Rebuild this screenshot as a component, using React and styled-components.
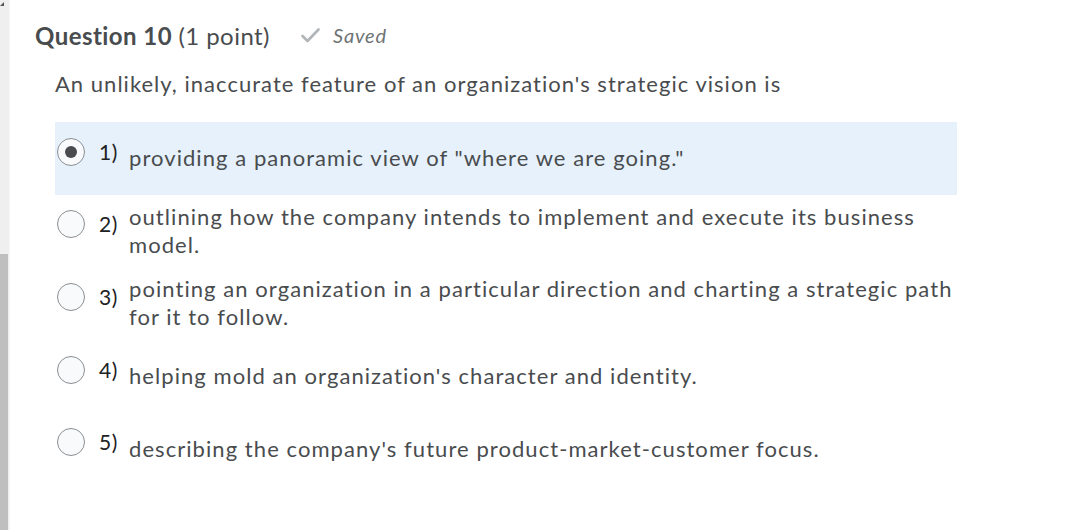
import React from "react";
import styled, { createGlobalStyle } from "styled-components";

const Global = createGlobalStyle`
  html, body { margin: 0; padding: 0; background: #ffffff; }
  body { font-family: Lato, "Open Sans", "Liberation Sans", sans-serif; color: #494c4e; }
`;

const Page = styled.div`
  display: flex;
  width: 1077px;
  height: 530px;
  overflow: hidden;
`;

const Scrollbar = styled.div`
  position: relative;
  width: 9px;
  flex: none;
  display: flex;
  flex-direction: column;
  background: #efefef;
  border-right: 1px solid #f6f6f6;
`;

const ScrollArrow = styled.div`
  position: absolute;
  left: 0;
  top: 2px;
  width: 0;
  height: 0;
  border-left: 4px solid transparent;
  border-bottom: 4px solid #555;
`;

const ScrollTrack = styled.div`
  height: 254px;
  flex: none;
`;

const ScrollThumb = styled.div`
  flex: 1;
  width: 8px;
  background: #bfbfbf;
`;

const Content = styled.div`
  flex: 1;
  padding: 20px 0 0 25px;
`;

const Header = styled.div`
  display: flex;
  align-items: center;
  height: 30px;
`;

const Title = styled.h2`
  margin: 0;
  font-size: 24px;
  letter-spacing: 0.45px;
  font-weight: 700;
  color: #494c4e;
`;

const Points = styled.span`
  font-weight: 400;
`;

const Saved = styled.span`
  display: flex;
  align-items: center;
  margin-left: 31px;
  font-size: 20px;
  letter-spacing: 0.8px;
  font-style: italic;
  color: #6e7376;
  gap: 13px;
`;

const Prompt = styled.p`
  margin: 20px 0 0 20px;
  font-size: 22px;
  letter-spacing: 1.02px;
  line-height: 28px;
  color: #494c4e;
`;

const Options = styled.div`
  margin: 24px 0 0 20px;
  width: 902px;
  display: flex;
  flex-direction: column;
`;

const Row = styled.label`
  display: flex;
  align-items: center;
  min-height: 72.6px;
  padding-left: 2px;
  background: ${(p) => (p.$selected ? "#e6f1fb" : "transparent")};
`;

const Lead = styled.div`
  display: flex;
  align-items: center;
  padding-bottom: 13px;
  flex: none;
`;

const Radio = styled.span`
  width: 28px;
  height: 28px;
  box-sizing: border-box;
  border-radius: 50%;
  border: 1px solid #8a8f93;
  background: #f9fafb;
  display: flex;
  align-items: center;
  justify-content: center;
  &::after {
    content: "";
    display: ${(p) => (p.$checked ? "block" : "none")};
    width: 12px;
    height: 12px;
    border-radius: 50%;
    background: #494c4e;
  }
`;

const Num = styled.span`
  width: 30px;
  margin-left: 14px;
  font-size: 21px;
  letter-spacing: 0.6px;
  line-height: 24px;
  color: #202122;
`;

const Text = styled.span`
  flex: 1;
  font-size: 22px;
  letter-spacing: 1.06px;
  line-height: 28px;
  color: #494c4e;
`;

const options = [
  'providing a panoramic view of "where we are going."',
  "outlining how the company intends to implement and execute its business model.",
  "pointing an organization in a particular direction and charting a strategic path for it to follow.",
  "helping mold an organization's character and identity.",
  "describing the company's future product-market-customer focus.",
];

const Check = () => (
  <svg width="19" height="15" viewBox="0 0 19 15" fill="none">
    <path d="M1.5 8 L6.5 13 L17.5 1.5" stroke="#b1b5b8" strokeWidth="2.6" strokeLinecap="round" strokeLinejoin="round" />
  </svg>
);

export default function App() {
  return (
    <>
      <Global />
      <Page>
        <Scrollbar>
          <ScrollArrow />
          <ScrollTrack />
          <ScrollThumb />
        </Scrollbar>
        <Content>
          <Header>
            <Title>
              Question 10 <Points>(1 point)</Points>
            </Title>
            <Saved>
              <Check />
              Saved
            </Saved>
          </Header>
          <Prompt>An unlikely, inaccurate feature of an organization's strategic vision is</Prompt>
          <Options>
            {options.map((o, i) => (
              <Row key={i} $selected={i === 0}>
                <Lead>
                  <Radio $checked={i === 0} />
                  <Num>{i + 1})</Num>
                </Lead>
                <Text>{o}</Text>
              </Row>
            ))}
          </Options>
        </Content>
      </Page>
    </>
  );
}
